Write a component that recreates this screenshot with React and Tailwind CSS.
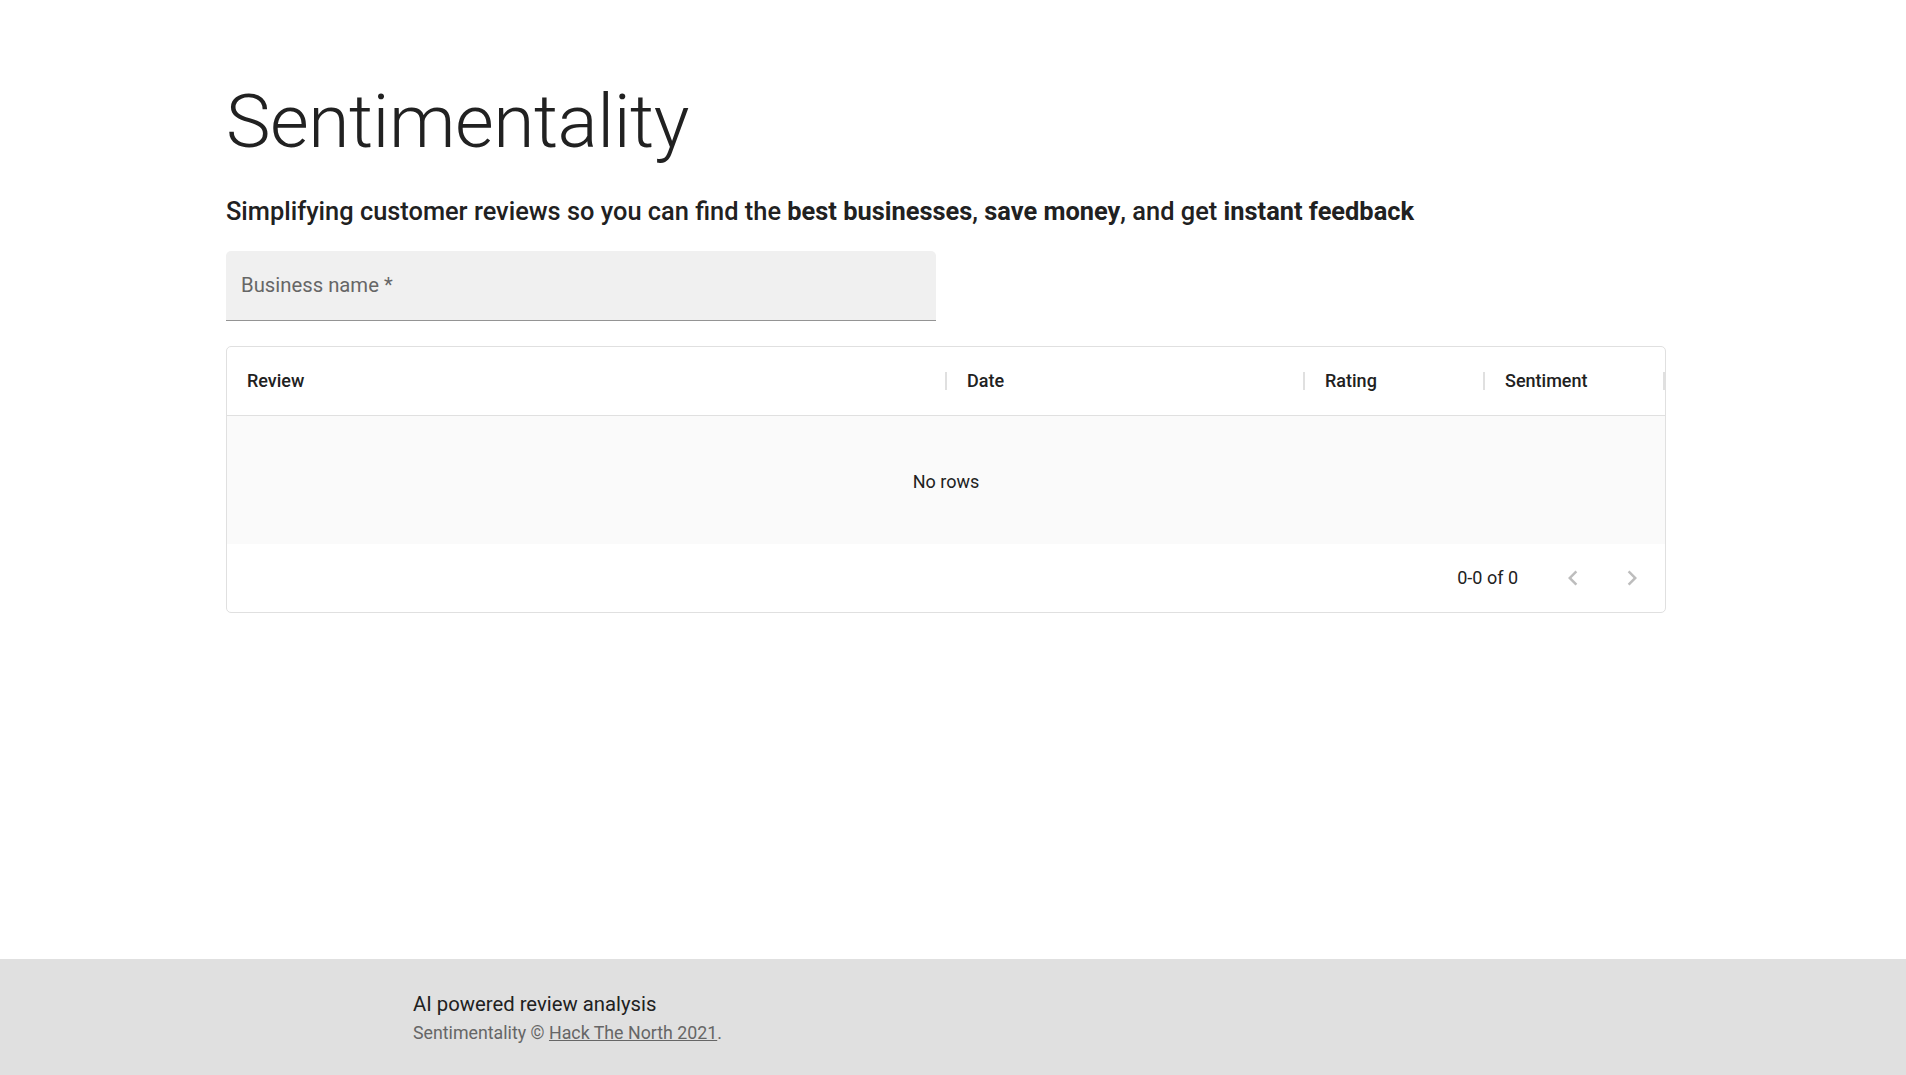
import React from "react";

const columns = [
  { label: "Review", width: "w-[720px]" },
  { label: "Date", width: "w-[358px]" },
  { label: "Rating", width: "w-[180px]" },
  { label: "Sentiment", width: "w-[180px]" },
];

function ArrowIcon({ dir }) {
  const d =
    dir === "left"
      ? "M15.41 16.59 10.83 12l4.58-4.59L14 6l-6 6 6 6 1.41-1.41z"
      : "M8.59 16.59 13.17 12 8.59 7.41 10 6l6 6-6 6-1.41-1.41z";
  return (
    <svg viewBox="0 0 24 24" className="w-[30px] h-[30px] fill-[#bdbdbd]">
      <path d={d} />
    </svg>
  );
}

function ReviewTable() {
  return (
    <div className="w-[1440px] rounded-[5px] border border-[#e0e0e0] bg-white">
      {/* header */}
      <div className="flex h-[69px] border-b border-[#e0e0e0]">
        {columns.map((c) => (
          <div key={c.label} className={`${c.width} flex items-center justify-between`}>
            <span className="pl-[20px] text-[18px] font-medium text-[#212121]">{c.label}</span>
            <span className="w-[2px] h-[18px] bg-[#e0e0e0]" />
          </div>
        ))}
      </div>
      {/* body */}
      <div className="h-[128px] bg-[#fafafa] flex items-center justify-center pt-[3px]">
        <span className="text-[18px] text-[#212121]">No rows</span>
      </div>
      {/* pagination */}
      <div className="h-[68px] flex items-center justify-end pr-[9px]">
        <span className="text-[18px] text-[#212121]">0-0 of 0</span>
        <div className="flex items-center gap-[11px] ml-[31px]">
          <button className="w-[48px] h-[48px] flex items-center justify-center">
            <ArrowIcon dir="left" />
          </button>
          <button className="w-[48px] h-[48px] flex items-center justify-center">
            <ArrowIcon dir="right" />
          </button>
        </div>
      </div>
    </div>
  );
}

export default function App() {
  return (
    <div
      className="min-h-screen flex flex-col bg-white text-[#212121]"
      style={{ fontFamily: "Roboto, 'Liberation Sans', sans-serif" }}
    >
      <main className="flex-1 pl-[226px] pt-[76px]">
        <h1 className="text-[75px] font-light leading-[1.2] tracking-[-0.5px]">Sentimentality</h1>

        <p className="mt-[25px] text-[25.4px] font-medium leading-[1.6]">
          Simplifying customer reviews so you can find the <b className="font-bold">best businesses</b>,{" "}
          <b className="font-bold">save money</b>, and get <b className="font-bold">instant feedback</b>
        </p>

        <div className="mt-[19px] w-[710px] h-[70px] rounded-t-[5px] bg-[#f0f0f0] border-b border-[#949494] flex items-center pl-[15px]">
          <span className="text-[20.3px] text-[#666666]">Business name *</span>
        </div>

        <div className="mt-[25px]">
          <ReviewTable />
        </div>
      </main>

      <footer className="bg-[#e0e0e0] pl-[413px] pt-[30px] pb-[30px]">
        <p className="text-[20.3px] leading-[1.5] text-[#212121]">AI powered review analysis</p>
        <p className="text-[17.8px] leading-[1.43] text-[#666666]">
          Sentimentality ©{" "}
          <a href="#" className="underline">
            Hack The North 2021
          </a>
          .
        </p>
      </footer>
    </div>
  );
}
